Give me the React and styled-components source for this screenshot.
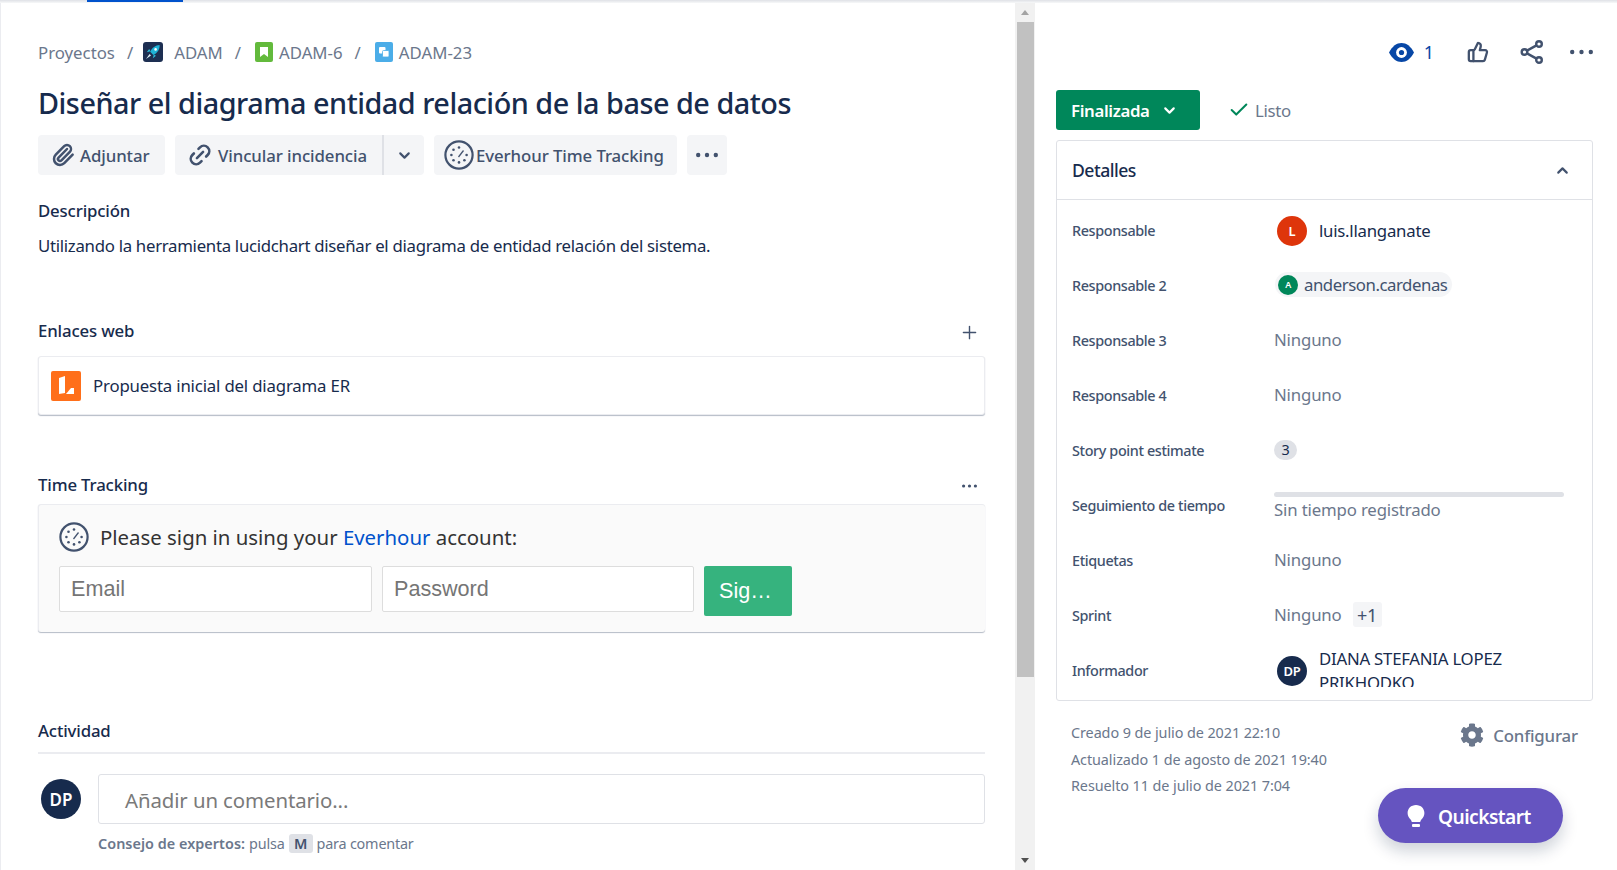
import React from 'react'
import styled, { createGlobalStyle } from 'styled-components'
import { ThumbsUp, Paperclip, Link2, ChevronDown, ChevronUp, Check, Plus } from 'lucide-react'
import { FaCog } from 'react-icons/fa'

const FONT = `"Noto Sans", "Open Sans", Arial, sans-serif`

const GlobalStyle = createGlobalStyle`
  html, body { margin: 0; padding: 0; height: 100%; overflow: hidden; background: #fff; }
  body { font-family: ${FONT}; color: #172B4D; }
  * { box-sizing: border-box; }
`

const Page = styled.div`
  position: relative;
  width: 1617px;
  height: 870px;
  display: flex;
  flex-direction: column;
  overflow: hidden;
`
const TopStrip = styled.div`
  height: 3px;
  flex: none;
  background: linear-gradient(#dfe1e6, #f7f8f9);
`
const TopTab = styled.div`
  width: 96px;
  height: 2px;
  margin-left: 87px;
  background: #0052CC;
`
const Main = styled.div`
  flex: 1;
  display: flex;
  min-height: 0;
`
const LeftColumn = styled.div`
  width: 1015px;
  flex: none;
  padding: 0 30px 0 37px;
  border-left: 1px solid #ebecf0;
  overflow: hidden;
`
const Breadcrumb = styled.nav`
  margin-top: 38px;
  height: 24px;
  padding-bottom: 2px;
  display: flex;
  align-items: center;
  font-size: 16.8px;
  color: #6B778C;
`
const Crumb = styled.span`
  margin-left: ${p => p.$gap || 0}px;
`
const Slash = styled.span`
  margin: 0 ${p => p.$right}px 0 ${p => p.$left}px;
`
const CrumbIcon = styled.svg`
  width: ${p => p.$width || 20}px;
  height: 20px;
  flex: none;
`
const Title = styled.h1`
  margin: 18px 0 0;
  height: 40px;
  line-height: 40px;
  font-size: 28.8px;
  font-weight: 500;
  letter-spacing: -0.48px;
  color: #172B4D;
  white-space: nowrap;
`
const Toolbar = styled.div`
  margin-top: 12px;
  display: flex;
  gap: 10px;
  height: 40px;
`
const ToolButton = styled.button`
  height: 40px;
  width: ${p => p.$width}px;
  padding: 0 0 0 ${p => p.$pad || 0}px;
  border: none;
  border-radius: 4px;
  background: #F4F5F7;
  color: #42526E;
  display: flex;
  align-items: center;
  justify-content: ${p => (p.$center ? 'center' : 'flex-start')};
  gap: ${p => p.$gap || 0}px;
  font: 500 16.8px ${FONT};
  letter-spacing: -0.08px;
  white-space: nowrap;
`
const ButtonGroup = styled.div`
  display: flex;
`
const SplitLeft = styled(ToolButton)`
  border-radius: 4px 0 0 4px;
`
const SplitRight = styled(ToolButton)`
  border-radius: 0 4px 4px 0;
  border-left: 2px solid #dfe1e6;
`
const SectionHead = styled.div`
  margin-top: ${p => p.$top}px;
  height: 24px;
  padding-bottom: 2px;
  display: flex;
  align-items: center;
  justify-content: space-between;
  font-size: 16.8px;
  font-weight: 500;
  letter-spacing: -0.15px;
  color: #172B4D;
`
const HeadAction = styled.span`
  display: flex;
  margin: 4px ${p => p.$right}px 0 0;
  color: #42526E;
`
const Description = styled.p`
  margin: 11px 0 0;
  line-height: 24px;
  font-size: 16.8px;
  letter-spacing: -0.29px;
  color: #172B4D;
  white-space: nowrap;
`
const LinkCard = styled.div`
  margin-top: 13px;
  height: 59px;
  padding-left: 12px;
  display: flex;
  align-items: center;
  gap: 12px;
  background: #fff;
  border: 1px solid #ebecf0;
  border-radius: 3px;
  box-shadow: 0 1px 1px rgba(9, 30, 66, 0.3);
  font-size: 16.8px;
  letter-spacing: -0.17px;
`
const SignInBox = styled.div`
  margin-top: 7px;
  height: 128px;
  padding: 17px 20px 0;
  background: #FAFAFA;
  border-top: 1px solid #ebecf0;
  border-left: 1px solid #ebecf0;
  border-radius: 3px;
  box-shadow: 0 1px 1px rgba(9, 30, 66, 0.3);
`
const SignInTitle = styled.div`
  height: 30px;
  display: flex;
  align-items: center;
  gap: 11px;
  font-size: 20.4px;
  color: #333;
`
const Everhour = styled.a`
  color: #0052CC;
`
const SignInRow = styled.div`
  margin-top: 14px;
  display: flex;
  align-items: flex-start;
  gap: 10px;
`
const TextInput = styled.input`
  width: ${p => p.$width}px;
  height: 46px;
  padding: 0 11px;
  background: #fff;
  border: 1px solid #ddd;
  border-radius: 2px;
  font: 21.6px "Liberation Sans", Arial, sans-serif;
  &::placeholder { color: #757575; opacity: 1; }
`
const SignInButton = styled.button`
  width: 88px;
  height: 50px;
  border: none;
  border-radius: 2px;
  background: #36B37E;
  color: #fff;
  font: 21.6px "Liberation Sans", Arial, sans-serif;
  padding: 0 5px 0 0;
`
const Divider = styled.div`
  margin-top: 9px;
  height: 2px;
  background: #ebecf0;
`
const CommentRow = styled.div`
  margin-top: 20px;
  display: flex;
  align-items: flex-start;
  gap: 17px;
  padding-left: 3px;
`
const Avatar = styled.div`
  width: ${p => p.$size}px;
  height: ${p => p.$size}px;
  flex: none;
  border-radius: 50%;
  background: ${p => p.$bg};
  color: #fff;
  display: flex;
  align-items: center;
  justify-content: center;
  font-size: ${p => p.$font}px;
  font-weight: 600;
`
const CommentAvatar = styled(Avatar)`
  margin-top: 5px;
`
const CommentInput = styled.div`
  flex: 1;
  height: 50px;
  padding: 2px 0 0 26px;
  display: flex;
  align-items: center;
  border: 1px solid #dfe1e6;
  border-radius: 3px;
  font-size: 20.4px;
  letter-spacing: -0.1px;
  color: #7a7a7a;
`
const Tip = styled.div`
  margin: 8px 0 0 60px;
  height: 22px;
  display: flex;
  align-items: center;
  gap: 4px;
  font-size: 14.4px;
  letter-spacing: -0.2px;
  color: #6B778C;
`
const TipStrong = styled.strong`
  font-weight: 600;
  letter-spacing: 0.04px;
`
const KeyCap = styled.span`
  width: 24px;
  height: 19px;
  display: flex;
  align-items: center;
  justify-content: center;
  background: #dfe1e6;
  border-radius: 3px;
  font-weight: 600;
  color: #42526E;
`
const ScrollTrack = styled.div`
  width: 20px;
  flex: none;
  display: flex;
  flex-direction: column;
  align-items: center;
  background: #f1f1f1;
`
const ScrollArrow = styled.div`
  flex: none;
  width: 0;
  height: 0;
  margin: 7px 0;
  border-left: 4px solid transparent;
  border-right: 4px solid transparent;
  ${p => (p.$down
    ? 'border-top: 5px solid #505050; margin-top: auto;'
    : 'border-bottom: 5px solid #a3a3a3;')}
`
const ScrollThumb = styled.div`
  width: 17px;
  height: 655px;
  flex: none;
  background: #c1c1c1;
`
const RightColumn = styled.div`
  flex: 1;
  min-width: 0;
  padding: 0 24px 0 21px;
`
const Actions = styled.div`
  margin-top: 34px;
  height: 30px;
  display: flex;
  align-items: center;
  justify-content: flex-end;
`
const Watchers = styled.span`
  margin-left: 10px;
  font-size: 18px;
  color: #0747A6;
`
const ActionIcon = styled.span`
  display: flex;
  margin-left: ${p => p.$left}px;
  color: #42526E;
`
const StatusRow = styled.div`
  margin-top: 23px;
  display: flex;
  align-items: center;
  height: 40px;
`
const StatusButton = styled.button`
  width: 144px;
  height: 40px;
  padding: 0 0 0 15px;
  border: none;
  border-radius: 3px;
  background: #00875A;
  color: #fff;
  display: flex;
  align-items: center;
  gap: 11px;
  font: 600 16.8px ${FONT};
  letter-spacing: -0.35px;
`
const Resolution = styled.span`
  margin-left: 28px;
  display: flex;
  align-items: center;
  gap: 5px;
  font-size: 16.8px;
  letter-spacing: -0.3px;
  color: #6B778C;
`
const Details = styled.section`
  margin-top: 10px;
  height: 561px;
  border: 1px solid #dfe1e6;
  border-radius: 3px;
`
const DetailsHead = styled.div`
  height: 59px;
  padding: 0 21px 0 15px;
  display: flex;
  align-items: center;
  justify-content: space-between;
  border-bottom: 1px solid #dfe1e6;
  font-size: 17.6px;
  font-weight: 500;
  letter-spacing: -0.5px;
`
const DetailsBody = styled.div`
  height: 487px;
  padding: 3px 28px 0 15px;
  overflow: hidden;
`
const Row = styled.div`
  height: 55px;
  display: grid;
  grid-template-columns: 202px 1fr;
  align-items: center;
`
const Label = styled.div`
  font-size: 14.4px;
  font-weight: 500;
  letter-spacing: -0.38px;
  color: #42526E;
`
const Value = styled.div`
  display: flex;
  align-items: center;
  padding-bottom: 2px;
  font-size: 16.8px;
  letter-spacing: -0.16px;
  color: ${p => (p.$muted ? '#6B778C' : '#172B4D')};
`
const PersonValue = styled(Value)`
  padding-bottom: 0;
  letter-spacing: -0.24px;
`
const PersonAvatar = styled(Avatar)`
  margin: 0 12px 0 3px;
`
const PersonName = styled.span`
  line-height: 24px;
`
const Pill = styled.span`
  height: 25px;
  padding: 0 5px 0 3px;
  margin-left: 1px;
  display: inline-flex;
  align-items: center;
  gap: 6px;
  background: #F4F5F7;
  border-radius: 13px;
  color: #42526E;
  letter-spacing: -0.46px;
`
const PointBadge = styled.span`
  width: 23px;
  height: 20px;
  display: flex;
  align-items: center;
  justify-content: center;
  border-radius: 10px;
  background: #dfe1e6;
  font-size: 14.4px;
`
const TimeValue = styled.div`
  padding-top: 2px;
  font-size: 16.8px;
  letter-spacing: -0.16px;
  color: #6B778C;
`
const TimeBar = styled.div`
  height: 5px;
  margin-bottom: 1px;
  border-radius: 3px;
  background: #dfe1e6;
`
const Chip = styled.span`
  margin-left: 11px;
  width: 29px;
  height: 25px;
  display: flex;
  align-items: center;
  justify-content: center;
  border-radius: 3px;
  background: #F4F5F7;
  font-size: 18px;
  color: #42526E;
`
const Footer = styled.div`
  margin-top: 19px;
  padding: 0 15px;
  display: flex;
  justify-content: space-between;
  align-items: flex-start;
`
const Dates = styled.div`
  font-size: 14.4px;
  line-height: 26.6px;
  letter-spacing: -0.08px;
  color: #6B778C;
`
const Configure = styled.span`
  margin-top: 3px;
  display: flex;
  align-items: center;
  gap: 9px;
  font-size: 16.8px;
  font-weight: 500;
  letter-spacing: -0.15px;
  color: #6B778C;
`
const Quickstart = styled.button`
  position: absolute;
  left: 1378px;
  top: 788px;
  width: 185px;
  height: 55px;
  padding: 1px 0 0 29px;
  display: flex;
  align-items: center;
  gap: 13px;
  border: none;
  border-radius: 28px;
  background: #6554C0;
  color: #fff;
  box-shadow: 0 8px 16px rgba(9, 30, 66, 0.2);
  font: 600 19.2px ${FONT};
  letter-spacing: -0.55px;
`

const Dots = ({ size = 22, r = 2.2, color = 'currentColor' }) => (
  <svg width={size} height={8} viewBox={`0 0 ${size} 8`} fill={color}>
    <circle cx={r} cy="4" r={r} />
    <circle cx={size / 2} cy="4" r={r} />
    <circle cx={size - r} cy="4" r={r} />
  </svg>
)

const RocketIcon = () => (
  <CrumbIcon viewBox="0 0 20 20">
    <rect width="20" height="20" rx="3" fill="#1d2f52" />
    <path d="M16.6 3c-4 .2-7.6 2.6-9.4 6.8l3.2 3.2C14.4 11 16.8 7.4 16.6 3z" fill="#1fb2d6" />
    <path d="M7.4 9.2 3.8 10.2l2.4-3.2zM10.8 12.8l-1 3.4 3.2-2.4z" fill="#2bbfdc" />
    <path d="M6.6 12 3 17l5-3.4z" fill="#dff3f8" />
    <circle cx="12.6" cy="7.4" r="1.3" fill="#fff" />
  </CrumbIcon>
)

const StoryIcon = () => (
  <CrumbIcon viewBox="0 0 18 20" $width={18}>
    <rect width="18" height="20" rx="2" fill="#63BA3C" />
    <path d="M5 5h8v10l-4-3-4 3z" fill="#fff" />
  </CrumbIcon>
)

const SubtaskIcon = () => (
  <CrumbIcon viewBox="0 0 18 20" $width={18}>
    <rect width="18" height="20" rx="2" fill="#4BADE8" />
    <rect x="4" y="5" width="6.5" height="6.5" rx="1" fill="#fff" />
    <rect x="7.5" y="8.5" width="6.5" height="6.5" rx="1" fill="#fff" stroke="#4BADE8" strokeWidth="0.8" />
  </CrumbIcon>
)

const EverhourIcon = ({ size = 30, color = '#42526E' }) => (
  <svg width={size} height={size} viewBox="0 0 30 30" fill={color} style={{ flex: 'none' }}>
    <circle cx="15" cy="15" r="13.6" fill="none" stroke={color} strokeWidth="2.2" />
    <path d="M14 16.5l5-6.5 1 1-5 6.5z" />
    <circle cx="15" cy="7.5" r="1.3" />
    <circle cx="9.5" cy="9.8" r="1.3" />
    <circle cx="7.4" cy="15" r="1.3" />
    <circle cx="9.5" cy="20.2" r="1.3" />
    <circle cx="15" cy="22.4" r="1.3" />
    <circle cx="20.4" cy="20.2" r="1.3" />
    <circle cx="22.6" cy="15" r="1.3" />
  </svg>
)

const LucidIcon = () => (
  <svg width="30" height="30" viewBox="0 0 30 30" style={{ flex: 'none' }}>
    <rect width="30" height="30" rx="2" fill="#FF6F1A" />
    <path d="M8 7l6-2v17l-6 1z" fill="#fff" />
    <path d="M15 23l5-6h3v6z" fill="#fff" />
  </svg>
)

const EyeIcon = () => (
  <svg width="25" height="19" viewBox="0 0 25 19">
    <path d="M0 9.5C3.5 3 7.5 0 12.5 0S21.5 3 25 9.5C21.5 16 17.5 19 12.5 19S3.5 16 0 9.5Z" fill="#0747A6" />
    <circle cx="12.5" cy="9.5" r="5.4" fill="#fff" />
    <circle cx="12.5" cy="9.5" r="2.6" fill="#0747A6" />
  </svg>
)

const ShareIcon = () => (
  <svg width="24" height="24" viewBox="0 0 24 24" fill="none" stroke="currentColor" strokeWidth="2.4">
    <circle cx="4.5" cy="12" r="2.8" />
    <circle cx="19" cy="4" r="2.8" />
    <circle cx="19" cy="20" r="2.8" />
    <path d="M7 10.6 16.5 5.4M7 13.4l9.5 5.2" />
  </svg>
)

const BulbIcon = () => (
  <svg width="18" height="23" viewBox="0 0 18 23" fill="#fff" style={{ flex: 'none' }}>
    <path d="M9 0C4 0 .6 3.6.6 8c0 3 1.4 4.8 3 6.6.7.8 1 1.6 1.2 2.4h8.4c.2-.8.5-1.6 1.2-2.4 1.6-1.8 3-3.6 3-6.6C17.4 3.6 14 0 9 0z" />
    <rect x="5" y="19" width="8" height="3" rx="1" />
  </svg>
)

const emptyRows = ['Responsable 3', 'Responsable 4']

const App = () => {
  return (
    <Page>
      <GlobalStyle />
      <TopStrip><TopTab /></TopStrip>
      <Main>
        <LeftColumn>
          <Breadcrumb>
            <Crumb>Proyectos</Crumb>
            <Slash $left={12} $right={10}>/</Slash>
            <RocketIcon />
            <Crumb $gap={11}>ADAM</Crumb>
            <Slash $left={12} $right={14}>/</Slash>
            <StoryIcon />
            <Crumb $gap={6}>ADAM-6</Crumb>
            <Slash $left={12} $right={14}>/</Slash>
            <SubtaskIcon />
            <Crumb $gap={6}>ADAM-23</Crumb>
          </Breadcrumb>
          <Title>Diseñar el diagrama entidad relación de la base de datos</Title>
          <Toolbar>
            <ToolButton $width={127} $pad={13} $gap={5}>
              <Paperclip size={24} strokeWidth={2.5} />Adjuntar
            </ToolButton>
            <ButtonGroup>
              <SplitLeft $width={207} $pad={12} $gap={5}>
                <Link2 size={26} strokeWidth={2.4} style={{ transform: 'rotate(-45deg)' }} />Vincular incidencia
              </SplitLeft>
              <SplitRight $width={42} $center><ChevronDown size={17} strokeWidth={3} /></SplitRight>
            </ButtonGroup>
            <ToolButton $width={243} $pad={10} $gap={2}>
              <EverhourIcon />Everhour Time Tracking
            </ToolButton>
            <ToolButton $width={40} $center><Dots /></ToolButton>
          </Toolbar>
          <SectionHead $top={24}>Descripción</SectionHead>
          <Description>Utilizando la herramienta lucidchart diseñar el diagrama de entidad relación del sistema.</Description>
          <SectionHead $top={61}>
            Enlaces web
            <HeadAction $right={5}><Plus size={21} strokeWidth={1.6} /></HeadAction>
          </SectionHead>
          <LinkCard>
            <LucidIcon />
            Propuesta inicial del diagrama ER
          </LinkCard>
          <SectionHead $top={58}>
            Time Tracking
            <HeadAction $right={8}><Dots size={15} r={1.6} /></HeadAction>
          </SectionHead>
          <SignInBox>
            <SignInTitle>
              <EverhourIcon />
              <span>Please sign in using your <Everhour>Everhour</Everhour> account:</span>
            </SignInTitle>
            <SignInRow>
              <TextInput $width={313} placeholder="Email" readOnly />
              <TextInput $width={312} placeholder="Password" readOnly />
              <SignInButton>Sig…</SignInButton>
            </SignInRow>
          </SignInBox>
          <SectionHead $top={87}>Actividad</SectionHead>
          <Divider />
          <CommentRow>
            <CommentAvatar $size={40} $bg="#172B4D" $font={17}>DP</CommentAvatar>
            <CommentInput>Añadir un comentario...</CommentInput>
          </CommentRow>
          <Tip>
            <TipStrong>Consejo de expertos:</TipStrong> pulsa <KeyCap>M</KeyCap> para comentar
          </Tip>
        </LeftColumn>
        <ScrollTrack>
          <ScrollArrow />
          <ScrollThumb />
          <ScrollArrow $down />
        </ScrollTrack>
        <RightColumn>
          <Actions>
            <EyeIcon />
            <Watchers>1</Watchers>
            <ActionIcon $left={33}><ThumbsUp size={22} strokeWidth={2.5} /></ActionIcon>
            <ActionIcon $left={31}><ShareIcon /></ActionIcon>
            <ActionIcon $left={26}><Dots size={23} /></ActionIcon>
          </Actions>
          <StatusRow>
            <StatusButton>Finalizada <ChevronDown size={17} strokeWidth={3} /></StatusButton>
            <Resolution><Check size={22} strokeWidth={2.2} color="#00875A" />Listo</Resolution>
          </StatusRow>
          <Details>
            <DetailsHead>Detalles <ChevronUp size={17} strokeWidth={3} color="#42526E" /></DetailsHead>
            <DetailsBody>
              <Row>
                <Label>Responsable</Label>
                <PersonValue><PersonAvatar $size={30} $bg="#DE350B" $font={13}>L</PersonAvatar>luis.llanganate</PersonValue>
              </Row>
              <Row>
                <Label>Responsable 2</Label>
                <Value><Pill><Avatar $size={20} $bg="#00875A" $font={9}>A</Avatar>anderson.cardenas</Pill></Value>
              </Row>
              {emptyRows.map(label => (
                <Row key={label}>
                  <Label>{label}</Label>
                  <Value $muted>Ninguno</Value>
                </Row>
              ))}
              <Row>
                <Label>Story point estimate</Label>
                <Value><PointBadge>3</PointBadge></Value>
              </Row>
              <Row>
                <Label>Seguimiento de tiempo</Label>
                <TimeValue><TimeBar />Sin tiempo registrado</TimeValue>
              </Row>
              <Row>
                <Label>Etiquetas</Label>
                <Value $muted>Ninguno</Value>
              </Row>
              <Row>
                <Label>Sprint</Label>
                <Value $muted>Ninguno <Chip>+1</Chip></Value>
              </Row>
              <Row>
                <Label>Informador</Label>
                <PersonValue>
                  <PersonAvatar $size={30} $bg="#172B4D" $font={13}>DP</PersonAvatar>
                  <PersonName>DIANA STEFANIA LOPEZ PRIKHODKO</PersonName>
                </PersonValue>
              </Row>
            </DetailsBody>
          </Details>
          <Footer>
            <Dates>
              <div>Creado 9 de julio de 2021 22:10</div>
              <div>Actualizado 1 de agosto de 2021 19:40</div>
              <div>Resuelto 11 de julio de 2021 7:04</div>
            </Dates>
            <Configure><FaCog size={24} />Configurar</Configure>
          </Footer>
        </RightColumn>
      </Main>
      <Quickstart><BulbIcon />Quickstart</Quickstart>
    </Page>
  )
}

export default App
